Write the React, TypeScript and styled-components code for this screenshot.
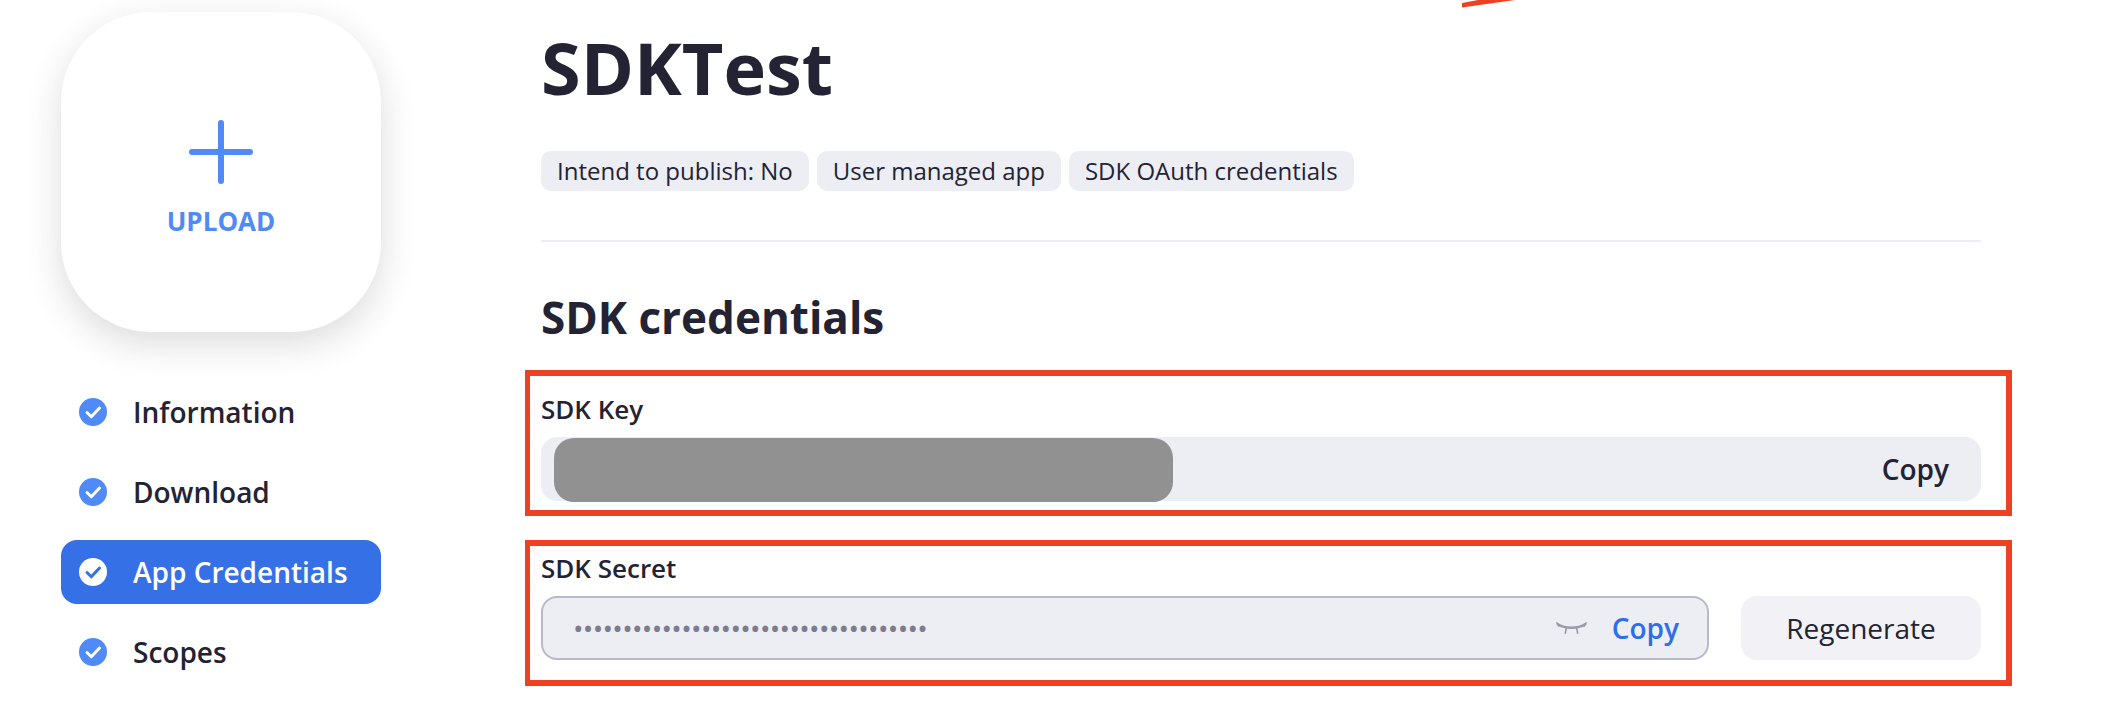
import React from "react";
import styled, { createGlobalStyle } from "styled-components";

const Global = createGlobalStyle`
  html, body { margin: 0; padding: 0; background: #fff; }
  body { width: 2102px; height: 709px; overflow: hidden; font-family: "Open Sans", "Liberation Sans", sans-serif; color: #232333; }
  * { box-sizing: border-box; }
`;

const Page = styled.div`
  position: relative;
  width: 2102px;
  height: 709px;
  overflow: hidden;
  display: flex;
  align-items: flex-start;
  padding-left: 61px;
  gap: 160px;
`;

const Sidebar = styled.aside`
  width: 320px;
  flex: none;
  padding-top: 12px;
`;

const UploadCard = styled.div`
  width: 320px;
  height: 320px;
  border-radius: 90px;
  background: #fff;
  box-shadow: 0 12px 36px rgba(35, 35, 51, 0.16);
  display: flex;
  flex-direction: column;
  align-items: center;
  padding-top: 108px;
  margin-bottom: 48px;
`;

const UploadLabel = styled.div`
  margin-top: 19px;
  font-size: 26px;
  line-height: 36px;
  font-weight: 700;
  color: #4f8af7;
`;

const Nav = styled.nav`
  display: flex;
  flex-direction: column;
  gap: 16px;
`;

const NavItem = styled.div<{ $active?: boolean }>`
  height: 64px;
  border-radius: 16px;
  display: flex;
  align-items: center;
  gap: 26px;
  padding-left: 18px;
  font-size: 28px;
  font-weight: 600;
  background: ${(p) => (p.$active ? "#3670e6" : "transparent")};
  color: ${(p) => (p.$active ? "#fff" : "#232333")};
`;

const Main = styled.main`
  width: 1440px;
  flex: none;
`;

const Title = styled.h1`
  margin: 0;
  padding-top: 19px;
  font-size: 72px;
  line-height: 96px;
  font-weight: 700;
`;

const Badges = styled.div`
  display: flex;
  gap: 8px;
  margin-top: 36px;
`;

const Badge = styled.span`
  height: 40px;
  padding: 0 16px;
  border-radius: 10px;
  background: #ededf4;
  font-size: 24px;
  line-height: 40px;
  white-space: nowrap;
`;

const Divider = styled.hr`
  margin: 49px 0 0;
  border: 0;
  height: 2px;
  background: #ededf4;
`;

const Heading = styled.h2`
  margin: 45px 0 0;
  font-size: 44px;
  line-height: 60px;
  font-weight: 700;
`;

const Marked = styled.section<{ $top: number; $pad: number }>`
  margin: ${(p) => p.$top}px -31px 0 -16px;
  height: 146px;
  padding: ${(p) => p.$pad}px 25px 0 11px;
  border: 6px solid #ee4023;
  border-left-width: 5px;
`;

const FieldLabel = styled.div`
  font-size: 26px;
  line-height: 32px;
  font-weight: 600;
  margin-bottom: 12px;
`;

const KeyField = styled.div`
  position: relative;
  height: 64px;
  border-radius: 16px;
  background: #ededf4;
  display: flex;
  align-items: center;
  justify-content: flex-end;
  padding-right: 32px;
`;

const Redaction = styled.div`
  position: absolute;
  left: 13px;
  top: 1px;
  width: 619px;
  height: 64px;
  border-radius: 20px;
  background: #919191;
`;

const CopyText = styled.span<{ $blue?: boolean }>`
  font-size: 28px;
  font-weight: 600;
  color: ${(p) => (p.$blue ? "#2d6fe8" : "#232333")};
`;

const SecretRow = styled.div`
  display: flex;
  gap: 32px;
`;

const SecretField = styled.div`
  flex: 1;
  height: 64px;
  border: 2px solid #b9b9cb;
  border-radius: 16px;
  background: #ededf4;
  display: flex;
  align-items: center;
  padding: 0 28px 0 30px;
`;

const Dots = styled.span`
  flex: 1;
  font-size: 28px;
  letter-spacing: -0.69px;
  color: #7c7c8d;
  white-space: nowrap;
  overflow: hidden;
`;

const EyeIcon = styled.svg`
  width: 31px;
  height: 14px;
  margin-right: 25px;
  flex: none;
`;

const RegenerateButton = styled.button`
  width: 240px;
  height: 64px;
  flex: none;
  border: 0;
  border-radius: 16px;
  background: #f1f1f6;
  color: #232333;
  font-family: inherit;
  font-size: 28px;
  font-weight: 400;
`;

const Arrow = styled.svg`
  position: absolute;
  left: 1455px;
  top: 0;
  width: 70px;
  height: 10px;
`;

const Check = ({ inverted }: { inverted?: boolean }) => (
  <svg width="28" height="28" viewBox="0 0 28 28" style={{ flex: "none" }}>
    <circle cx="14" cy="14" r="14" fill={inverted ? "#fff" : "#4f8af7"} />
    <path
      d="M8 14.5 12.3 18.8 20.5 10"
      fill="none"
      stroke={inverted ? "#3670e6" : "#fff"}
      strokeWidth="3"
      strokeLinecap="round"
      strokeLinejoin="round"
    />
  </svg>
);

export default function App() {
  return (
    <Page>
      <Global />
      <Sidebar>
        <UploadCard>
          <svg width="64" height="64" viewBox="0 0 64 64">
            <path d="M3 32H61M32 3V61" stroke="#4f8af7" strokeWidth="6" strokeLinecap="round" />
          </svg>
          <UploadLabel>UPLOAD</UploadLabel>
        </UploadCard>
        <Nav>
          <NavItem><Check />Information</NavItem>
          <NavItem><Check />Download</NavItem>
          <NavItem $active><Check inverted />App Credentials</NavItem>
          <NavItem><Check />Scopes</NavItem>
        </Nav>
      </Sidebar>
      <Main>
        <Title>SDKTest</Title>
        <Badges>
          <Badge>Intend to publish: No</Badge>
          <Badge>User managed app</Badge>
          <Badge>SDK OAuth credentials</Badge>
        </Badges>
        <Divider />
        <Heading>SDK credentials</Heading>
        <Marked $top={23} $pad={17}>
          <FieldLabel>SDK Key</FieldLabel>
          <KeyField>
            <Redaction />
            <CopyText>Copy</CopyText>
          </KeyField>
        </Marked>
        <Marked $top={24} $pad={6}>
          <FieldLabel>SDK Secret</FieldLabel>
          <SecretRow>
            <SecretField>
              <Dots>{"•".repeat(36)}</Dots>
              <EyeIcon viewBox="0 0 33 14">
                <path d="M2 3C10 8 23 8 31 3" fill="none" stroke="#9a9aa8" strokeWidth="2.8" strokeLinecap="round" />
                <path d="M1 1.5 3 5M32 1.5 30 5M11 7 10 12.5M22 7 23 12.5" fill="none" stroke="#9a9aa8" strokeWidth="1.7" strokeLinecap="round" />
              </EyeIcon>
              <CopyText $blue>Copy</CopyText>
            </SecretField>
            <RegenerateButton>Regenerate</RegenerateButton>
          </SecretRow>
        </Marked>
      </Main>
      <Arrow viewBox="0 0 70 10">
        <path d="M7 3 L23 0 L60 0 L7 7.6 Z" fill="#ee4023" />
      </Arrow>
    </Page>
  );
}
